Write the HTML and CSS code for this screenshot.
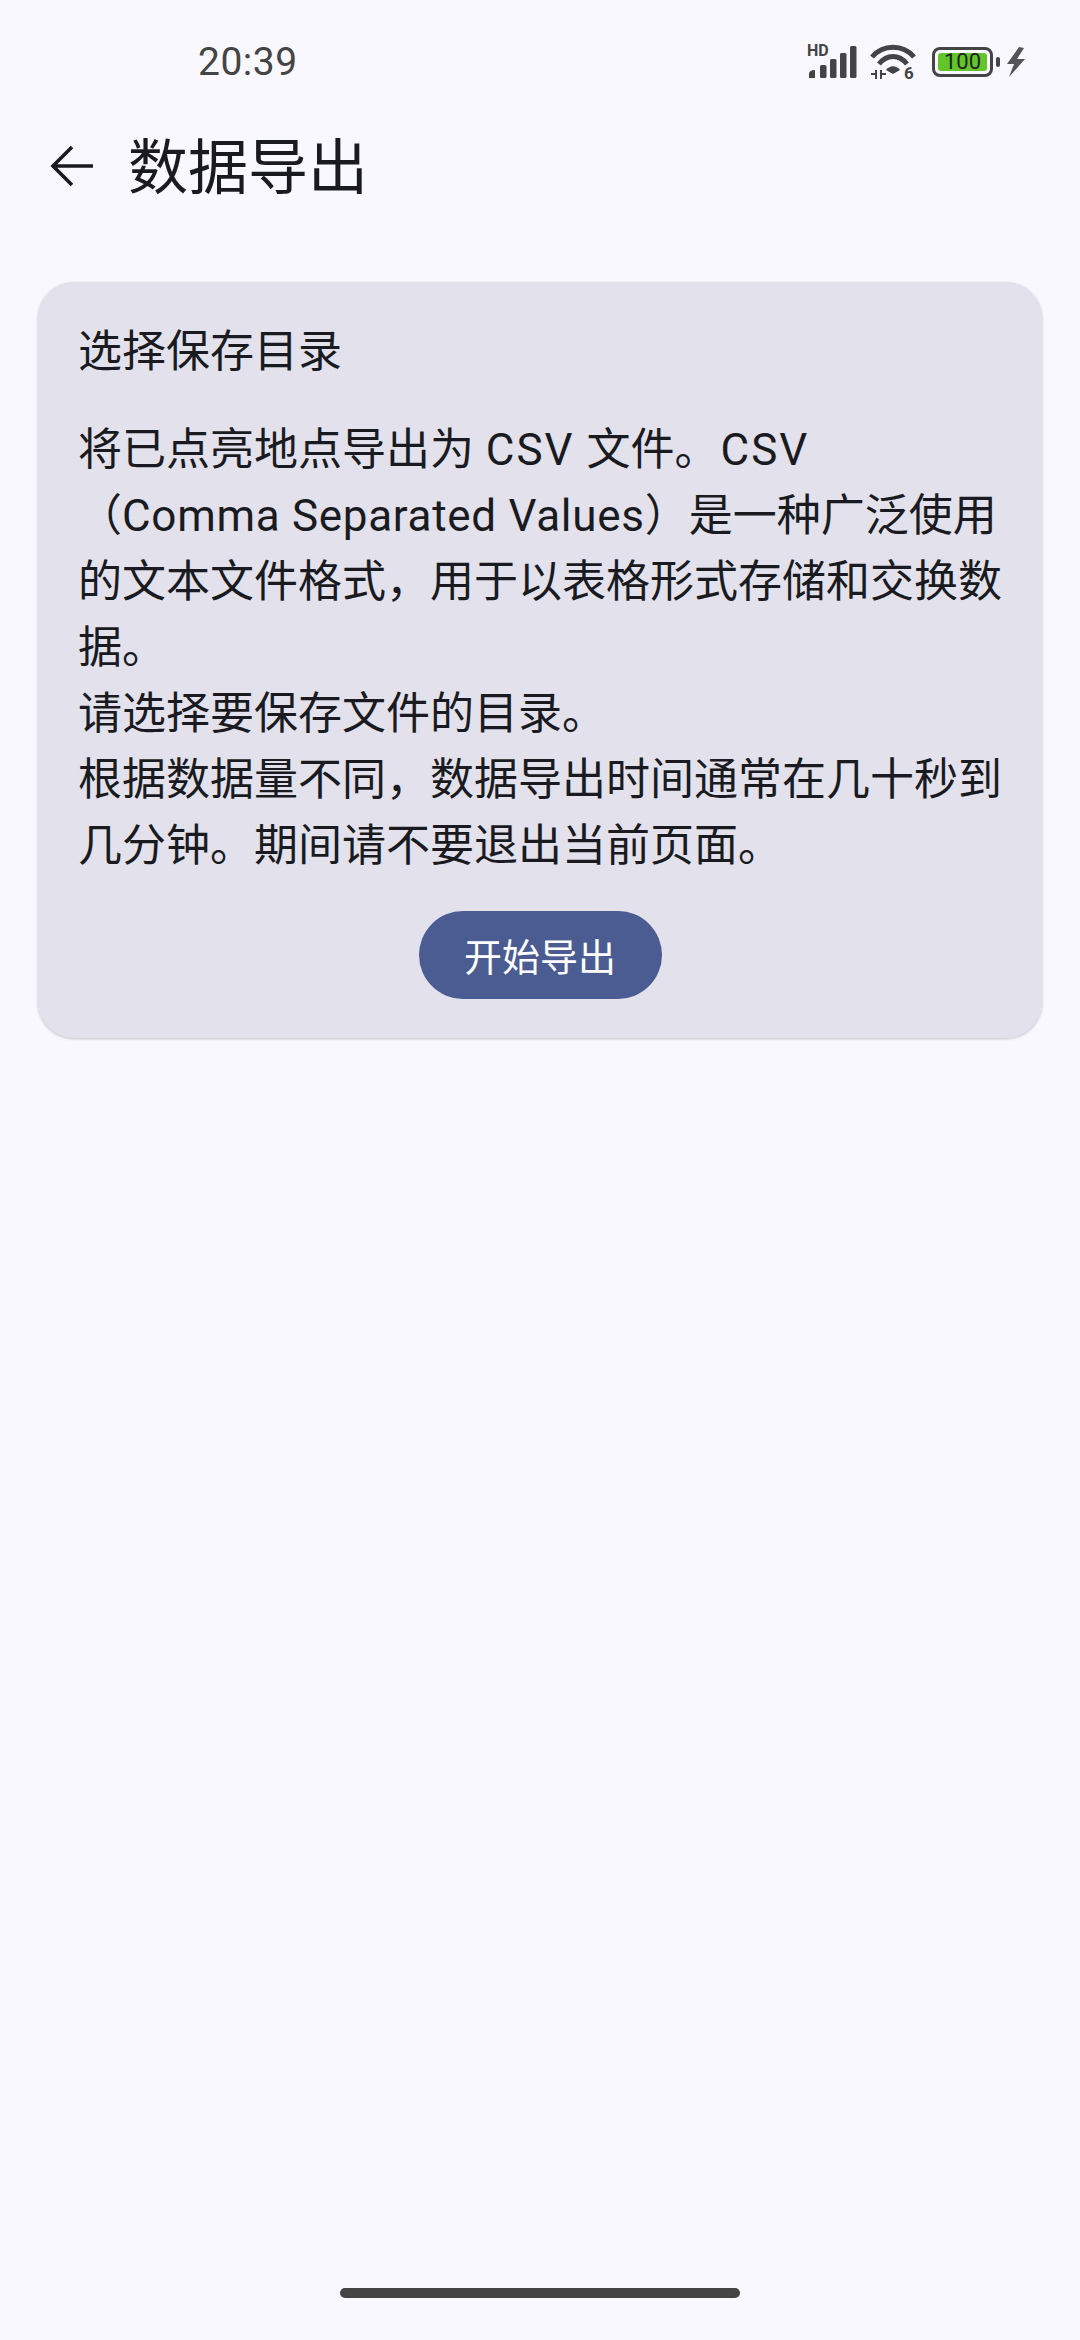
FILE: index.html
```html
<!DOCTYPE html>
<html lang="zh-CN">
<head>
    <meta charset="UTF-8">
    <meta name="viewport" content="width=device-width, initial-scale=1.0">
    <title>数据导出</title>
    <link rel="stylesheet" href="styles.css">
</head>

<body>
    <div class="status-bar">
        <span class="hora">20:39</span>
        <div class="status-icons">
            <svg class="ic-signal" width="50" height="34" viewBox="0 0 50 34">
                <text x="0" y="11" class="hd">HD</text>
                <path d="M2 33 V29 Q2 25 8 25 V33 Z" fill="#444"/>
                <rect x="13" y="20" width="6.5" height="13" rx="1.5" fill="#444"/>
                <rect x="23" y="14" width="6.5" height="19" rx="1.5" fill="#444"/>
                <rect x="33" y="8" width="6.5" height="25" rx="1.5" fill="#444"/>
                <rect x="43" y="1" width="6.5" height="32" rx="1.5" fill="#444"/>
            </svg>
            <svg class="ic-wifi" width="46" height="36" viewBox="0 0 46 36">
                <path d="M2 13 C13 0 33 0 44 13" fill="none" stroke="#444" stroke-width="5"/>
                <path d="M9 20 C17 10 29 10 37 20" fill="none" stroke="#444" stroke-width="5"/>
                <path d="M16 26 C20 21 26 21 30 26 L23 30 Z" fill="#444"/>
                <path d="M1 29 H5 V26 H7 V35 H5 V31 H1 Z M10 26 H12 V29 H16 V31 H12 V35 H10 Z" fill="#444"/>
                <text x="34" y="35" class="seis">6</text>
            </svg>
            <div class="bateria">
                <div class="bateria-cuerpo"><span class="bateria-nivel">100</span></div>
                <div class="bateria-punta"></div>
            </div>
            <svg class="ic-rayo" width="18" height="30" viewBox="0 0 18 30">
                <path d="M12 0 L0 17 H7 L2 30 L18 12 H10 L17 1 Z" fill="#555"/>
            </svg>
        </div>
    </div>

    <header class="barra">
        <svg class="volver" width="44" height="44" viewBox="0 0 44 44">
            <path d="M43 22 H4 M22 3 L3 22 L22 41" fill="none" stroke="#1a1b21" stroke-width="3.6"/>
        </svg>
        <h1>数据导出</h1>
    </header>

    <section class="tarjeta">
        <h2>选择保存目录</h2>
        <p>将已点亮地点导出为 <span class="sigla">CSV</span> 文件。<span class="sigla">CSV</span><br>（<span class="latin">Comma Separated Values</span>）是一种广泛使用的文本文件格式，用于以表格形式存储和交换数据。<br>请选择要保存文件的目录。<br>根据数据量不同，数据导出时间通常在几十秒到几分钟。期间请不要退出当前页面。</p>
        <div class="acciones">
            <a href="#" class="boton">开始导出</a>
        </div>
    </section>

    <div class="home-bar"></div>
</body>
</html>
```

FILE: styles.css
```css
html, body {
    height: 100%;
}

body {
    font-family: "Noto Sans CJK SC", "Noto Sans", sans-serif;
    background-color: #f9f8ff;
    color: #1a1b21;
    margin: 0;
    padding: 0;
    display: flex;
    flex-direction: column;
    box-sizing: border-box;
}

.status-bar {
    height: 62px;
    margin-top: 31px;
    padding: 0 55px 0 198px;
    display: flex;
    align-items: center;
    justify-content: space-between;
}

.hora {
    font-family: Roboto, sans-serif;
    font-size: 39px;
    color: #444;
    letter-spacing: 0.5px;
}

.status-icons {
    display: flex;
    align-items: center;
}

.ic-signal, .ic-wifi {
    overflow: visible;
}

.ic-wifi {
    margin-left: 13px;
}

.ic-rayo {
    margin-left: 7px;
}

.hd {
    font-family: Roboto, sans-serif;
    font-size: 16px;
    font-weight: 700;
    fill: #444;
}

.seis {
    font-family: Roboto, sans-serif;
    font-size: 17px;
    font-weight: 700;
    fill: #444;
}

.bateria {
    margin-left: 16px;
    display: flex;
    align-items: center;
    gap: 3px;
}

.bateria-cuerpo {
    width: 61px;
    height: 30px;
    box-sizing: border-box;
    border: 3px solid #444;
    border-radius: 8px;
    padding: 3px;
    display: flex;
}

.bateria-nivel {
    flex: 1;
    background-color: #62c62a;
    border-radius: 3px;
    font-family: Roboto, sans-serif;
    font-size: 22px;
    line-height: 18px;
    text-align: center;
    color: #222;
}

.bateria-punta {
    width: 4px;
    height: 10px;
    background-color: #444;
    border-radius: 2px;
}

.barra {
    height: 100px;
    margin-top: 22px;
    padding-left: 50px;
    display: flex;
    align-items: center;
    gap: 34px;
}

.volver {
    margin-top: 2px;
}

.barra h1 {
    margin: 0;
    padding-bottom: 5px;
    font-size: 60px;
    font-weight: 400;
    line-height: 95px;
}

.tarjeta {
    margin: 67px 38px 0;
    padding: 33px 40px 39px;
    background-color: #e2e1ec;
    border-radius: 36px;
    box-shadow: 0 1px 3px rgba(0,0,0,0.22);
}

.tarjeta h2 {
    margin: 0 0 32px;
    font-size: 44px;
    font-weight: 400;
    line-height: 66px;
}

.tarjeta p {
    margin: 0;
    font-size: 44px;
    line-height: 66px;
}

.sigla, .latin {
    font-family: Roboto, sans-serif;
    line-height: 1;
}

.sigla {
    letter-spacing: 2px;
    margin: 0 2px;
}

.latin {
    letter-spacing: 0.7px;
}

.acciones {
    margin-top: 36px;
    display: flex;
    justify-content: center;
}

.boton {
    width: 243px;
    height: 88px;
    background-color: #4a5c92;
    color: white;
    border-radius: 44px;
    font-size: 38px;
    line-height: 88px;
    text-align: center;
    text-decoration: none;
}

.home-bar {
    width: 400px;
    height: 10px;
    margin: auto auto 42px;
    background-color: #444;
    border-radius: 5px;
}
```
